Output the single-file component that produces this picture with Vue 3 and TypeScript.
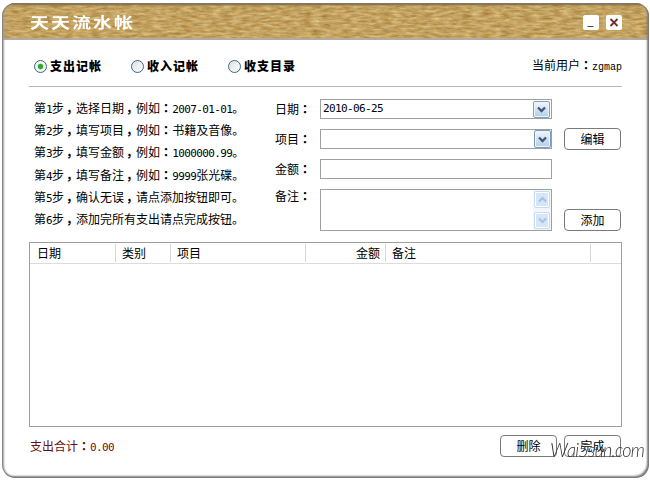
<script setup lang="ts">
import { h, ref, type FunctionalComponent } from 'vue'

const steps: string[] = [
  '第1步，选择日期，例如：2007-01-01。',
  '第2步，填写项目，例如：书籍及音像。',
  '第3步，填写金额，例如：1000000.99。',
  '第4步，填写备注，例如：9999张光碟。',
  '第5步，确认无误，请点添加按钮即可。',
  '第6步，添加完所有支出请点完成按钮。',
]
const tabs: string[] = ['支出记帐', '收入记帐', '收支目录']
const active = ref(0)
const date = ref('2010-06-25')
const total = ref('0.00')

// Sets half-width runs and full-width punctuation on a fixed 6px / 12px cell grid.
const CellText: FunctionalComponent<{ value: string }> = (props) =>
  h(
    'span',
    { class: 'cells' },
    props.value
      .split(/([\x21-\x7e]+|：|，)/)
      .filter(Boolean)
      .map((run) => {
        const cls = run === '：' ? 'colon' : run === '，' ? 'comma' : /^[\x21-\x7e]/.test(run) ? 'half' : 'full'
        return h('span', { class: cls }, run)
      }),
  )
CellText.props = ['value']
</script>

<template>
  <div class="window">
    <header class="titlebar">
      <svg class="wood" width="647" height="37" aria-hidden="true">
        <filter id="grain" x="0" y="0" width="100%" height="100%" color-interpolation-filters="sRGB">
          <feTurbulence type="fractalNoise" baseFrequency="0.1 0.4" numOctaves="3" seed="8" />
          <feColorMatrix
            values="0.30 0.08 0 0 0.575
                    0.36 0.00 0 0 0.455
                    0.36 -0.10 0 0 0.250
                    0 0 0 0 1"
          />
        </filter>
        <rect width="647" height="37" filter="url(#grain)" />
      </svg>
      <h1>天天流水帐</h1>
      <div class="controls">
        <button class="ctl"><svg width="16" height="15"><path d="M4.500 11.500h6" stroke="#444" /></svg></button>
        <button class="ctl">
          <svg width="16" height="15"><path d="M4.500 4l7 7M11.500 4l-7 7" stroke="#742c2c" stroke-width="1.800" /></svg>
        </button>
      </div>
    </header>

    <main>
      <nav>
        <label v-for="(tab, i) in tabs" :key="tab" class="tab" @click="active = i">
          <i class="radio" :class="{ on: active === i }"></i><b>{{ tab }}</b>
        </label>
        <span class="user"><CellText value="当前用户：zgmap" /></span>
      </nav>

      <section class="entry">
        <ol class="steps">
          <li v-for="s in steps" :key="s"><CellText :value="s" /></li>
        </ol>
        <div class="form">
          <div class="row">
            <label><CellText value="日期：" /></label>
            <div class="field">
              <CellText :value="date" />
              <span class="drop">
                <svg width="9" height="7"><path d="M1 1.500l3.500 3.500L8 1.500" fill="none" stroke="#435774" stroke-width="2.300" /></svg>
              </span>
            </div>
          </div>
          <div class="row">
            <label><CellText value="项目：" /></label>
            <div class="field combo">
              <span class="drop">
                <svg width="9" height="7"><path d="M1 1.500l3.500 3.500L8 1.500" fill="none" stroke="#435774" stroke-width="2.300" /></svg>
              </span>
            </div>
            <button class="btn">编辑</button>
          </div>
          <div class="row">
            <label><CellText value="金额：" /></label>
            <div class="field"></div>
          </div>
          <div class="row note">
            <label><CellText value="备注：" /></label>
            <div class="field area">
              <div class="scroll">
                <span><svg width="9" height="7"><path d="M1 5.500L4.500 2 8 5.500" fill="none" stroke="#a9bfdb" stroke-width="2" /></svg></span>
                <span><svg width="9" height="7"><path d="M1 1.500L4.500 5 8 1.500" fill="none" stroke="#a9bfdb" stroke-width="2" /></svg></span>
              </div>
            </div>
            <button class="btn">添加</button>
          </div>
        </div>
      </section>

      <section class="table">
        <div class="head">
          <span>日期</span><span>类别</span><span>项目</span><span class="num">金额</span><span>备注</span><span></span>
        </div>
      </section>

      <footer>
        <span class="total"><CellText :value="`支出合计：${total}`" /></span>
        <button class="btn">删除</button>
        <button class="btn">完成</button>
      </footer>
    </main>
    <div class="mark"><span class="cap">W</span>ai5sun.com</div>
  </div>
</template>

<style>
body {
  margin: 0;
  background: #fff;
}
.cells {
  display: inline-flex;
  align-items: baseline;
  white-space: pre;
}
.cells .half {
  font: 11px/14px 'DejaVu Sans Mono', monospace;
  letter-spacing: -0.620px;
}
.cells .colon {
  font-family: 'Noto Sans CJK JP', sans-serif;
  font-weight: 700;
}
.cells .comma {
  padding: 0 4px 0 2px;
  font-feature-settings: 'halt';
  font-weight: 700;
}
.user .cells .half {
  font: 10px/14px 'Liberation Mono', monospace;
  letter-spacing: 0;
}
</style>

<style scoped>
* {
  box-sizing: border-box;
}
.window {
  position: relative;
  z-index: 0;
  width: 647px;
  height: 475px;
  margin: 3px 1px 2px 2px;
  border-radius: 13px;
  background: #fff;
  overflow: hidden;
  color: #000;
  font: 12px/14px 'Noto Sans CJK SC', sans-serif;
}
.window::after {
  content: '';
  position: absolute;
  inset: 0;
  border-radius: 13px;
  box-shadow: inset 0 0 0 1px rgba(120, 120, 120, 0.65), inset -2px -2px 2px #808080, inset 2px 0 2px #a0a0a0;
  pointer-events: none;
}
.titlebar {
  position: relative;
  display: flex;
  align-items: center;
  justify-content: space-between;
  height: 37px;
  padding: 4px 27px 0 28px;
  box-shadow: inset 0 2px 2px #7a6540;
  border-bottom: 2px solid rgba(176, 172, 168, 0.85);
}
.wood {
  position: absolute;
  inset: 0;
  width: 100%;
  z-index: -1;
}
h1 {
  margin: -2px 0 0;
  color: #fff;
  font-size: 19px;
  line-height: 20px;
  font-weight: 700;
  letter-spacing: 2px;
  transform: scaleY(0.78);
}
.controls {
  display: flex;
  gap: 7px;
}
.ctl {
  width: 16px;
  height: 15px;
  padding: 0;
  border: 0;
  border-radius: 2px;
  background: #fff;
}
.ctl svg {
  display: block;
}
main {
  padding: 0 27px;
}
nav {
  display: flex;
  height: 47px;
  padding: 6px 0 0 5px;
  align-items: center;
  border-bottom: 1px solid #b5b5b5;
}
.tab {
  display: flex;
  align-items: center;
  width: 97px;
  gap: 3px;
}
.tab b {
  letter-spacing: 1px;
  font-weight: 900;
}
.radio {
  width: 13px;
  height: 13px;
  border: 1px solid #3d6586;
  border-radius: 50%;
  background: linear-gradient(135deg, #dcdfe2, #fff);
}
.radio.on {
  background: radial-gradient(circle, #2fa32f 0 2px, #5fc05f 2.6px, #f0f5ef 3.2px);
}
.user {
  margin-left: auto;
}
.entry {
  display: flex;
  height: 155px;
  padding: 12px 0 0 5px;
}
.steps {
  width: 241px;
  margin: 0;
  padding: 0;
  list-style: none;
}
.steps li {
  display: flex;
  align-items: flex-start;
  height: 22.200px;
  line-height: 18px;
}
.form {
  display: grid;
  grid-template-rows: 20px 20px 20px 42px;
  gap: 10px;
}
.row {
  display: flex;
  align-items: center;
}
.row label {
  width: 45px;
}
.field {
  display: flex;
  align-items: center;
  width: 232px;
  height: 20px;
  padding-left: 2px;
  border: 1px solid #9d9fa1;
  background: #fff;
}
.drop {
  display: flex;
  align-items: center;
  justify-content: center;
  width: 17px;
  height: 17px;
  margin: 0 1px 0 auto;
  border: 1px solid #7f9fc4;
  border-radius: 2px;
  box-shadow: inset 0 0 0 1px #eef5fc;
  background: linear-gradient(#f0f6fd, #b3cdea);
}
.combo .drop {
  height: 18px;
  margin-right: 0;
  border-color: #7c98ba;
}
.btn {
  width: 57px;
  height: 22px;
  margin-left: 12px;
  padding: 0 0 1px;
  border: 1px solid #7b7b7b;
  border-radius: 4px;
  background: #fff;
  color: #000;
  font: inherit;
}
.note {
  align-items: flex-start;
}
.note .btn {
  align-self: flex-end;
}
.area {
  height: 42px;
  justify-content: flex-end;
}
.scroll {
  display: flex;
  flex-direction: column;
  justify-content: space-between;
  width: 18px;
  height: 40px;
  padding: 1px;
  background: #f2f6fb;
}
.scroll span {
  display: flex;
  align-items: center;
  justify-content: center;
  height: 17px;
  border: 1px solid #c8dbef;
  border-radius: 2px;
  box-shadow: inset 0 0 0 1px #fff;
  background: #d5e6fa;
}
.table {
  width: 593px;
  height: 185px;
  border: 1px solid #9d9fa1;
}
.head {
  display: grid;
  grid-template-columns: 86px 55px 135px 80px 205px 1fr;
  height: 21px;
  border-bottom: 1px solid #dcdcdc;
  line-height: 18px;
}
.head span {
  height: 18px;
  margin-top: 1px;
  padding-left: 6px;
  border-right: 1px solid #d8d8d8;
}
.head span:first-child {
  padding-left: 7px;
}
.head span:last-child {
  border: 0;
}
.head .num {
  padding-right: 5px;
  text-align: right;
}
footer {
  display: flex;
  align-items: center;
  width: 593px;
  padding: 8px 1px 0 0;
}
footer .btn + .btn {
  margin-left: 7px;
}
.total {
  margin: 1px auto 0 1px;
  color: #6a1010;
}
.mark {
  position: absolute;
  left: 548px;
  top: 434px;
  color: #333;
  font: italic 300 19px/24px Lato, sans-serif;
  white-space: nowrap;
  letter-spacing: -0.800px;
  transform: scaleX(0.95);
  transform-origin: left;
  pointer-events: none;
}
.mark .cap {
  font-size: 20px;
}
</style>
